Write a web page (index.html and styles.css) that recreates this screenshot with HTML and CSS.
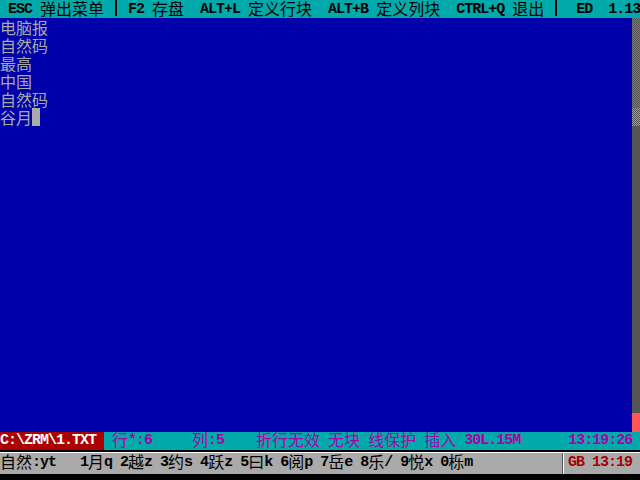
FILE: index.html
```html
<!DOCTYPE html>
<html>
<head>
<meta charset="utf-8">
<link rel="stylesheet" href="styles.css">
</head>
<body>
<div class="screen">
<div class="menubar"> ESC <i>弹出菜单</i> <b class="sep"></b> F2 <i>存盘</i>  ALT+L <i>定义行块</i>  ALT+B <i>定义列块</i>  CTRL+Q <i>退出</i> <b class="sep"></b>  ED  1.13</div>
<div class="main">
<div class="editor">
<div class="line">电脑报</div>
<div class="line">自然码</div>
<div class="line">最高</div>
<div class="line">中国</div>
<div class="line">自然码</div>
<div class="line">谷月<span class="cursor"></span></div>
</div>
<div class="scroll">
<div class="s-track"></div>
<div class="s-thumb"></div>
<div class="s-rest"></div>
<div class="s-end"></div>
</div>
</div>
<div class="status"><div class="path">C:\ZRM\1.TXT</div><div class="info"> <i>行</i>*:6     <i>列</i>:5    <i>折行无效</i> <i>无块</i> <i>线保护</i> <i>插入</i> 30L.15M      13:19:26</div></div>
<div class="imebar">
<div class="ime-row"><div class="ime-left"><i>自然</i>:yt   1<i>月</i>q 2<i>越</i>z 3<i>约</i>s 4<i>跃</i>z 5<i>曰</i>k 6<i>阅</i>p 7<i>岳</i>e 8<i>乐</i>/ 9<i>悦</i>x 0<i>栎</i>m</div><div class="ime-div"></div><div class="ime-right">GB 13:19</div></div>
</div>
</div>
</body>
</html>
```
FILE: styles.css
```css
html, body {
  margin: 0;
  padding: 0;
  background: #000;
}
.screen {
  width: 640px;
  height: 480px;
  overflow: hidden;
  background: #000;
}
.menubar, .status, .ime-left, .ime-right {
  font-family: "Liberation Mono", monospace;
  font-weight: bold;
  font-size: 15px;
  letter-spacing: -1px;
  line-height: 18px;
  white-space: pre;
}
i {
  font-style: normal;
  font-family: "Noto Sans CJK SC", sans-serif;
  font-weight: 400;
  font-size: 16px;
  letter-spacing: 0;
  line-height: 12px;
  vertical-align: -2px;
}
.menubar {
  height: 18px;
  background: #00AAAA;
  color: #000;
}
.sep {
  display: inline-block;
  width: 2px;
  height: 16px;
  margin: 0 3px;
  background: #000;
  vertical-align: -3px;
}
.main {
  height: 414px;
  display: flex;
}
.editor {
  flex: 1;
  background: #0000AA;
  color: #AAAAAA;
  font-family: "Noto Sans CJK SC", sans-serif;
  font-size: 16px;
  line-height: 18px;
}
.line {
  height: 18px;
}
.cursor {
  display: inline-block;
  width: 8px;
  height: 18px;
  background: #AAAAAA;
  vertical-align: top;
}
.scroll {
  width: 8px;
  display: flex;
  flex-direction: column;
}
.s-track {
  height: 90px;
  background: repeating-conic-gradient(#00AAAA 0 25%, #555555 0 50%) 0 0 / 2px 2px;
}
.s-thumb {
  height: 18px;
  background: repeating-conic-gradient(#FF55FF 0 25%, #555555 0 50%) 0 0 / 2px 2px;
}
.s-rest {
  flex: 1;
  background: #555555;
}
.s-end {
  height: 19px;
  background: #FF5555;
}
.status {
  height: 18px;
  display: flex;
}
.path {
  width: 104px;
  background: #AA0000;
  color: #FFFFFF;
}
.info {
  flex: 1;
  background: #00AAAA;
  color: #AA00AA;
}
.imebar {
  height: 30px;
  box-sizing: border-box;
  padding-top: 2px;
  background: #000;
}
.ime-row {
  height: 22px;
  box-sizing: border-box;
  border-top: 1px solid #FFFFFF;
  background: #AAAAAA;
  display: flex;
}
.ime-left {
  width: 562px;
  padding-top: 1px;
  color: #000;
}
.ime-div {
  width: 2px;
  background: linear-gradient(to right, #555555 50%, #FFFFFF 50%);
}
.ime-right {
  flex: 1;
  padding-left: 4px;
  padding-top: 1px;
  color: #AA0000;
}
```
